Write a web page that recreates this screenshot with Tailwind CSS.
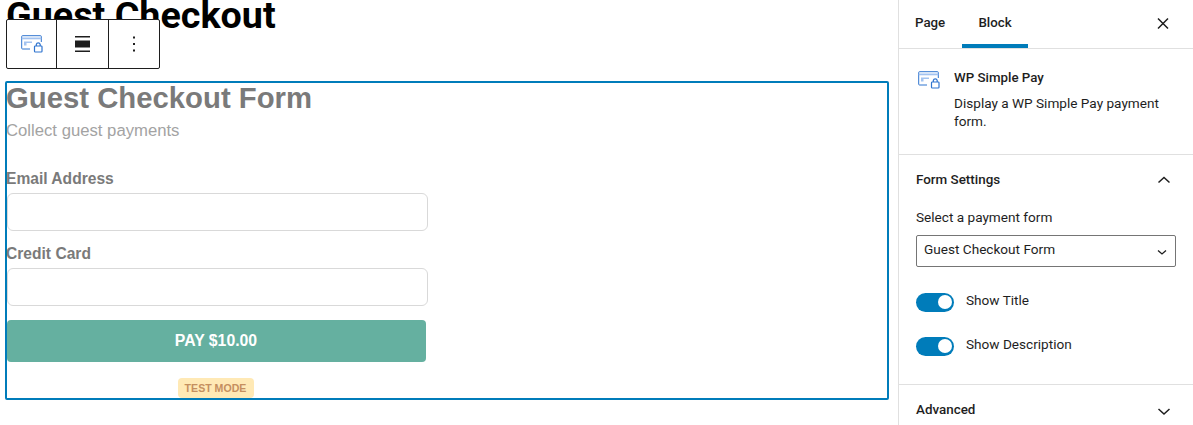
<!DOCTYPE html>
<html lang="en">
  <head>
    <meta charset="UTF-8" />
    <title>Guest Checkout</title>
    <script src="https://cdn.jsdelivr.net/npm/@tailwindcss/browser@4"></script>
  </head>
  <body class="bg-white h-[425px] w-[1193px] overflow-hidden flex font-['Roboto',sans-serif]">
    <!-- Editor -->
    <main class="relative w-[898px] shrink-0 overflow-hidden">
      <h1 class="ml-[6px] -mt-[7px] h-[88px] text-[37.7px] leading-[44px] font-bold text-black">Guest Checkout</h1>

      <!-- Block toolbar -->
      <div class="absolute left-[6px] top-[19px] flex h-[50px] w-[154px] rounded-[2px] border border-[#1e1e1e] bg-white">
        <div class="flex w-[50px] items-center justify-center border-r border-[#1e1e1e]">
          <svg class="w-[24px] h-[24px]" viewBox="0 0 24 24" fill="none">
            <path d="M10 17H2.500A.8.8 0 0 1 1.700 16.200V4.500A.8.8 0 0 1 2.500 3.700H20.500A.8.8 0 0 1 21.300 4.500V10" stroke="#2f74cf" stroke-width="1" />
            <path d="M1.700 5.500H21.300V7.300H1.700Z" fill="#a3c3f0" />
            <path d="M4 9.500H12V11H6.500V13.500H4Z" fill="#a3c3f0" />
            <rect x="14.500" y="14" width="7.500" height="6" rx="0.800" stroke="#2f74cf" stroke-width="1.200" />
            <path d="M16.300 14V12.500A2 2 0 0 1 20.200 12.500V14" stroke="#2f74cf" stroke-width="1.200" />
          </svg>
        </div>
        <div class="flex w-[52px] items-center justify-center border-r border-[#1e1e1e]">
          <svg class="w-[24px] h-[24px] -ml-[2px] -mt-[1px]" viewBox="0 0 24 24" fill="#1e1e1e">
            <path d="M5 4H20V5.500H5ZM5 8.500H20V15.500H5ZM5 18.500H20V20H5Z" />
          </svg>
        </div>
        <div class="flex flex-1 items-center justify-center">
          <svg class="w-[24px] h-[24px] -mt-[1px]" viewBox="0 0 24 24" fill="#1e1e1e">
            <path d="M13 19.500h-2v-2h2v2zm0-6.500h-2v-2h2v2zm0-6.500h-2v-2h2v2z" />
          </svg>
        </div>
      </div>

      <!-- Selected block -->
      <section class="ml-[5px] w-[884px] h-[319px] rounded-[2px] border-2 border-[#007cba] font-['Liberation_Sans',sans-serif]">
        <h2 class="-ml-[1px] h-[32px] text-[29.300px] leading-[30px] font-bold text-[#7a7a7a]">Guest Checkout Form</h2>
        <p class="-ml-[1px] mt-[4px] text-[16.700px] leading-[24px] text-[#a3a3a3]">Collect guest payments</p>

        <label class="-ml-[1px] mt-[27px] block text-[15.600px] leading-[18px] font-bold text-[#7a7a7a]">Email Address</label>
        <div class="mt-[5px] h-[38px] w-[421px] rounded-[6px] border border-[#d9d9d9]"></div>

        <label class="-ml-[1px] mt-[13px] block text-[15.600px] leading-[20px] font-bold text-[#7a7a7a]">Credit Card</label>
        <div class="mt-[4px] h-[38px] w-[421px] rounded-[6px] border border-[#d9d9d9]"></div>

        <button class="mt-[14px] block h-[42px] w-[419px] rounded-[4px] bg-[#65b0a0] pr-[1px] text-[15.800px] font-bold text-white">PAY $10.00</button>

        <div class="mt-[16px] flex w-[417px] justify-center">
          <span class="h-[20px] w-[76px] rounded-[4px] bg-[#ffe9b5] text-center text-[10.600px] leading-[20px] font-bold text-[#c58f5f]">TEST MODE</span>
        </div>
      </section>
    </main>

    <!-- Sidebar -->
    <aside class="w-[295px] shrink-0 border-l border-[#e0e0e0] text-[13.600px] text-[#1e1e1e]">
      <div class="flex h-[49px] items-start border-b border-[#e0e0e0] pl-[16px] pr-[20px]">
        <div class="h-[48px] w-[47px] pt-[15px] text-[13.300px] leading-[16px] font-medium">Page</div>
        <div class="h-[48px] w-[66px] border-b-4 border-[#007cba] pt-[15px] text-center text-[13.300px] leading-[16px] font-medium">Block</div>
        <svg class="ml-auto mt-[13px] w-[20px] h-[20px]" viewBox="0 0 20 20" fill="none" stroke="#1e1e1e" stroke-width="1.500">
          <path d="M5 5.500L15 15.500M15 5.500L5 15.500" />
        </svg>
      </div>

      <div class="flex h-[106px] border-b border-[#e0e0e0] pl-[18px] pt-[21px]">
        <svg class="w-[24px] h-[24px] shrink-0 -mt-[2px]" viewBox="0 0 24 24" fill="none">
          <path d="M10 17H2.500A.8.8 0 0 1 1.700 16.200V4.500A.8.8 0 0 1 2.500 3.700H20.500A.8.8 0 0 1 21.300 4.500V10" stroke="#2f74cf" stroke-width="1" />
          <path d="M1.700 5.500H21.300V7.300H1.700Z" fill="#a3c3f0" />
          <path d="M4 9.500H12V11H6.500V13.500H4Z" fill="#a3c3f0" />
          <rect x="14.500" y="14" width="7.500" height="6" rx="0.800" stroke="#2f74cf" stroke-width="1.200" />
          <path d="M16.300 14V12.500A2 2 0 0 1 20.200 12.500V14" stroke="#2f74cf" stroke-width="1.200" />
        </svg>
        <div class="ml-[13px] w-[220px]">
          <div class="text-[13.300px] leading-[16px] font-medium">WP Simple Pay</div>
          <p class="mt-[8px] leading-[18px]">Display a WP Simple Pay payment form.</p>
        </div>
      </div>

      <div class="h-[230px] border-b border-[#e0e0e0] px-[17px] pt-[17px]">
        <div class="flex h-[16px] items-center justify-between pr-[3px] text-[13.400px] font-medium">
          <span>Form Settings</span>
          <svg class="w-[18px] h-[18px]" viewBox="0 0 18 18" fill="none" stroke="#1e1e1e" stroke-width="1.500">
            <path d="M3.500 11.500L9 6.500L14.500 11.500" />
          </svg>
        </div>
        <div class="mt-[21px] leading-[16px]">Select a payment form</div>
        <div class="relative mt-[10px] flex h-[32px] w-[260px] items-center rounded-[2px] border border-[#757575] pb-[4px] pl-[7px]">
          <span>Guest Checkout Form</span>
          <svg class="absolute right-[6px] top-[9px] w-[14px] h-[14px]" viewBox="0 0 14 14" fill="none" stroke="#1e1e1e" stroke-width="1.300">
            <path d="M3 5.500L7 9L11 5.500" />
          </svg>
        </div>
        <div class="mt-[25px] flex h-[20px] items-center">
          <span class="flex h-[19px] w-[38px] items-center justify-end rounded-full bg-[#007cba] pr-[2px]"><span class="h-[14px] w-[14px] rounded-full bg-white"></span></span>
          <span class="ml-[12px] pb-[4px]">Show Title</span>
        </div>
        <div class="mt-[24px] flex h-[20px] items-center">
          <span class="flex h-[19px] w-[38px] items-center justify-end rounded-full bg-[#007cba] pr-[2px]"><span class="h-[14px] w-[14px] rounded-full bg-white"></span></span>
          <span class="ml-[12px] pb-[4px]">Show Description</span>
        </div>
      </div>

      <div class="flex items-start justify-between pl-[17px] pr-[20px] pt-[17px] text-[13.400px] font-medium">
        <span class="leading-[16px]">Advanced</span>
        <svg class="w-[18px] h-[18px]" viewBox="0 0 18 18" fill="none" stroke="#1e1e1e" stroke-width="1.500">
          <path d="M3.500 7L9 12L14.500 7" />
        </svg>
      </div>
    </aside>
  </body>
</html>
